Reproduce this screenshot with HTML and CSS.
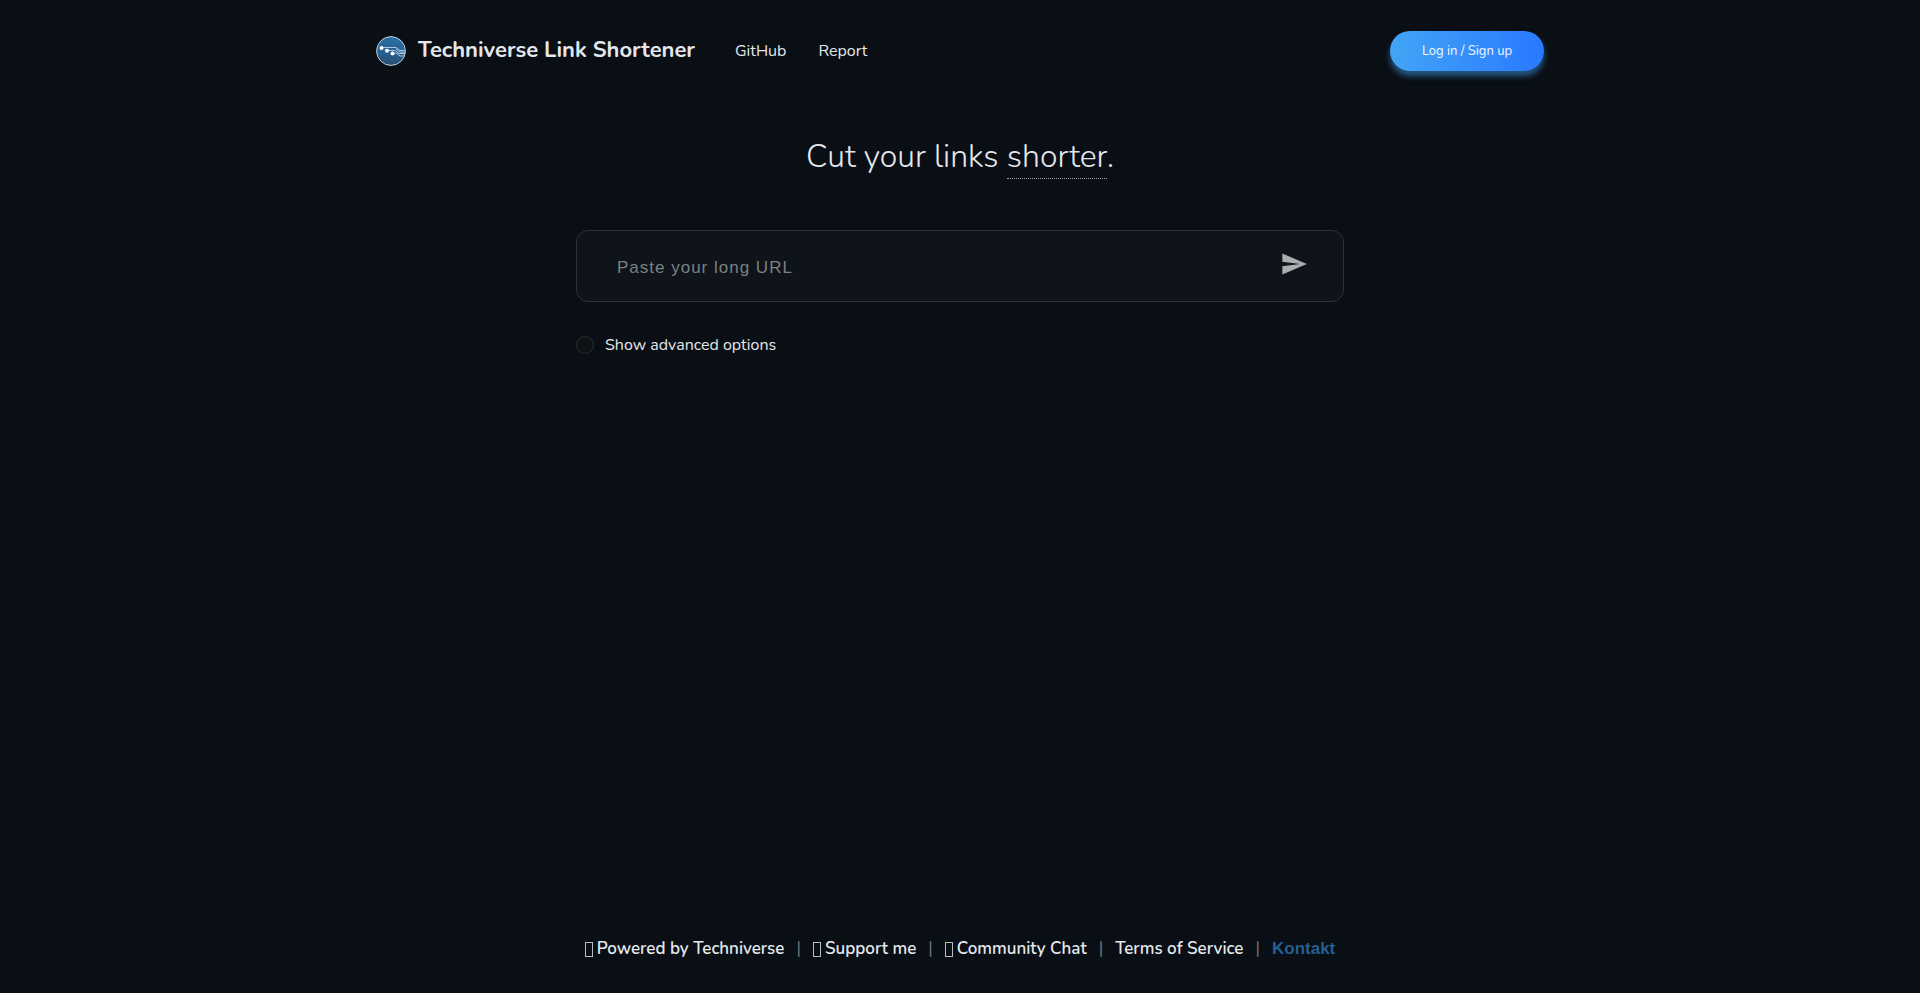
FILE: index.html
```html
<!DOCTYPE html>
<html lang="en">
<head>
<meta charset="utf-8">
<meta name="viewport" content="width=device-width, initial-scale=1">
<title>Techniverse Link Shortener</title>
<link rel="stylesheet" href="styles.css">
</head>
<body>
<header class="header">
  <a class="brand" href="#">
    <svg class="logo" viewBox="0 0 30 30" aria-hidden="true">
      <defs><linearGradient id="disc" x1="0" y1="0" x2="0" y2="1"><stop offset="0" stop-color="#2c6fa6"/><stop offset="0.5" stop-color="#276294"/><stop offset="1" stop-color="#284e70"/></linearGradient></defs>
      <circle cx="15" cy="15" r="14.4" fill="url(#disc)" stroke="#c3cdd6"/>
      <g fill="none" stroke="#b9d2e6" stroke-width="0.9">
        <path d="M5.500 11.500H20l4 3h4.500"/>
        <path d="M11 14.500h8l4 3h6"/>
        <path d="M16.500 17.300h4l3.500 2.700h4"/>
        <path d="M20 13l4 3.200h5"/>
      </g>
      <g fill="#fff"><circle cx="5.500" cy="12" r="2"/><circle cx="11" cy="14.700" r="2"/><circle cx="16.500" cy="17.500" r="2"/></g>
    </svg>
    <span class="brand-name">Techniverse Link Shortener</span>
  </a>
  <nav class="nav">
    <a href="#">GitHub</a>
    <a href="#">Report</a>
  </nav>
  <a class="login" href="#">Log in / Sign up</a>
</header>
<main class="main">
  <h1 class="headline">Cut your links <span class="shorter">shorter</span>.</h1>
  <form class="form">
    <div class="field">
      <input class="url" type="text" placeholder="Paste your long URL" aria-label="Paste your long URL">
      <button class="send" type="button" aria-label="Shorten">
        <svg viewBox="0 0 24 24" aria-hidden="true"><path d="M2.010 21L23 12 2.010 3 2 10l15 2-15 2z"/></svg>
      </button>
    </div>
    <label class="advanced"><input type="checkbox">Show advanced options</label>
  </form>
</main>
<footer class="footer">
  <a href="#"><i class="box"></i>Powered by Techniverse</a>
  <span class="bar">|</span>
  <a href="#"><i class="box"></i>Support me</a>
  <span class="bar">|</span>
  <a href="#"><i class="box"></i>Community Chat</a>
  <span class="bar">|</span>
  <a href="#">Terms of Service</a>
  <span class="bar">|</span>
  <a class="contact" href="#">Kontakt</a>
</footer>
</body>
</html>
```
FILE: styles.css
```css
* { box-sizing: border-box; }
body {
  margin: 0;
  min-height: 100vh;
  display: flex;
  flex-direction: column;
  background: #0a0e15;
  color: #e4e8ec;
  font: 16px/24px Nunito, Lato, sans-serif;
}
a { color: inherit; text-decoration: none; }
.header {
  width: 100%;
  max-width: 1232px;
  height: 102px;
  margin: 0 auto;
  padding: 0 32px;
  display: flex;
  align-items: center;
}
.brand { display: flex; align-items: center; gap: 12px; }
.logo { width: 30px; height: 30px; }
.brand-name { font-size: 22px; line-height: 28px; font-weight: 700; padding-bottom: 2px; }
.nav { display: flex; gap: 32px; margin-left: 40px; }
.login {
  margin-left: auto;
  width: 154px;
  height: 40px;
  border-radius: 20px;
  background: linear-gradient(to right, #42a5f5, #2979ff);
  box-shadow: 0 5px 6px rgba(66, 165, 245, 0.5);
  color: #f2f8ff;
  font-size: 13px;
  line-height: 40px;
  text-align: center;
}
.main {
  flex: 1;
  width: 100%;
  max-width: 800px;
  margin: 0 auto;
  padding: 33px 16px 0;
}
.headline { margin: 0; font-size: 32px; line-height: 44px; font-weight: 300; text-align: center; }
.shorter { border-bottom: 1px dotted #a0a5aa; }
.form { margin-top: 51px; }
.field {
  display: flex;
  align-items: center;
  height: 72px;
  padding: 0 35px 0 40px;
  border: 1px solid #2d3236;
  border-radius: 12px;
  background: #0f141a;
}
.url {
  flex: 1;
  min-width: 0;
  padding: 4px 0 0;
  border: 0;
  outline: 0;
  background: transparent;
  color: #e4e8ec;
  font: 17px/24px "Liberation Sans", sans-serif;
  letter-spacing: 1px;
}
.url::placeholder { color: #7c8083; opacity: 1; }
.send { padding: 0 0 4px; border: 0; background: transparent; }
.send svg { display: block; width: 28px; height: 28px; fill: #a9adaf; }
.advanced { display: flex; align-items: center; gap: 11px; width: max-content; margin-top: 31px; }
.advanced input {
  appearance: none;
  width: 18px;
  height: 18px;
  margin: 0;
  border: 1px solid #2d3032;
  border-radius: 50%;
  background: #0f1215;
}
.footer {
  display: flex;
  flex-wrap: wrap;
  justify-content: center;
  gap: 12px;
  padding: 0 16px 32px;
  font-size: 17px;
  font-weight: 600;
}
.box { display: inline-block; width: 8px; height: 15px; margin-right: 4px; border: 1px solid #b8bcc0; vertical-align: -3px; }
.bar { color: #70757a; font-weight: 400; }
.contact { color: #235f93; font-family: "Liberation Sans", sans-serif; font-weight: 700; }
```
